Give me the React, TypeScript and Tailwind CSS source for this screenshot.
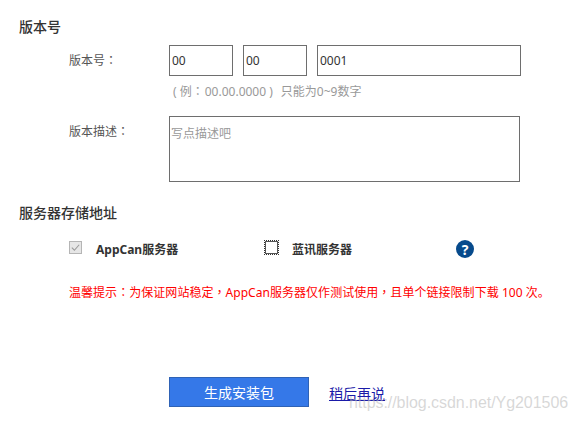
const FONT = "font-['Noto_Sans','Noto_Sans_CJK_SC',sans-serif]";

function Heading({ children }: { children: string }) {
  return <h2 className="text-[14px] leading-[20px] font-medium text-[#333]">{children}</h2>;
}

// centred full-width punctuation, as in the reference
function Punct({ children }: { children: string }) {
  return <span className="font-['Noto_Sans_CJK_TC',sans-serif]">{children}</span>;
}

function VersionInput({ value, width }: { value: string; width: string }) {
  return (
    <input
      readOnly
      value={value}
      className={`${width} h-[31px] border-[1px] border-[#6e6e6e] bg-white px-[2px] text-[12px] text-[#333] outline-none`}
    />
  );
}

export default function App() {
  return (
    <div className={`${FONT} relative h-[421px] w-[577px] overflow-hidden bg-white pl-[19px] pt-[17px]`}>
      <Heading>版本号</Heading>

      <div className="mt-[8px] flex">
        <label className="w-[100px] pl-[50px] pt-[6px] text-[12px] leading-[18px] whitespace-nowrap text-[#555]">
          版本号<Punct>：</Punct>
        </label>
        <div className="ml-[50px] flex gap-[10px]">
          <VersionInput value="00" width="w-[64px]" />
          <VersionInput value="00" width="w-[64px]" />
          <VersionInput value="0001" width="w-[204px]" />
        </div>
      </div>
      <p className="ml-[150px] mt-[6px] pl-[4px] text-[12px] leading-[18px] text-[#999]">
        ( 例<Punct>：</Punct>
        <span className="ml-[1px]">00.00.0000 )</span>
        <span className="ml-[8px]">只能为0~9数字</span>
      </p>

      <div className="mt-[15px] flex">
        <label className="w-[100px] pl-[50px] pt-[6px] text-[12px] leading-[18px] whitespace-nowrap text-[#555]">
          版本描述<Punct>：</Punct>
        </label>
        <textarea
          readOnly
          placeholder="写点描述吧"
          className="ml-[50px] h-[66px] w-[351px] resize-none border-[1px] border-[#6e6e6e] bg-white px-[1px] py-[8px] text-[12px] leading-[18px] outline-none placeholder:text-[#999]"
        />
      </div>

      <div className="mt-[21px]">
        <Heading>服务器存储地址</Heading>
      </div>

      <div className="mt-[17px] flex h-[20px] items-center text-[12px] font-bold text-[#333]">
        <span className="ml-[50px] -mt-[5px] flex h-[13px] w-[13px] items-center justify-center border-[1px] border-[#b5b5b5] bg-[#e6e6e6]">
          <svg viewBox="0 0 12 12" className="h-[11px] w-[11px]" fill="none" stroke="#9a9a9a" strokeWidth="1.2">
            <path d="M2 6.2 L4.8 9 L10 3" />
          </svg>
        </span>
        <span className="ml-[14px] w-[168px]">AppCan服务器</span>
        <span className="-mt-[5px] h-[15px] w-[15px] border-[1px] border-dotted border-[#333] outline-[1px] outline-offset-[-2px] outline-[#555]" />
        <span className="ml-[13px] w-[164px]">蓝讯服务器</span>
        <span className="-mt-[2px] flex h-[18px] w-[18px] items-center justify-center rounded-full bg-[#064a8c] text-[14px] font-bold text-white">?</span>
      </div>

      <p className="ml-[50px] mt-[23px] text-[12px] leading-[18px] tracking-[0.04px] whitespace-nowrap text-[#ff0000]">
        温馨提示<Punct>：</Punct>为保证网站稳定<Punct>，</Punct>AppCan服务器仅作测试使用<Punct>，</Punct>且单个链接限制下载 100 次。
      </p>

      <div className="ml-[150px] mt-[75px] flex items-center">
        <button className="h-[30px] w-[140px] border-[1px] border-[#2f62b5] bg-[#3578e8] text-[14px] text-white">生成安装包</button>
        <a href="#" className="ml-[20px] mt-[4px] text-[14px] leading-[20px] text-[#1a1aa8] underline">稍后再说</a>
      </div>

      <span className="absolute left-[349px] top-[393px] font-['Liberation_Sans',sans-serif] text-[16px] leading-[20px] tracking-[-0.05px] text-[#bdbdbd]/60">
        https://blog.csdn.net/Yg201506
      </span>
    </div>
  );
}
